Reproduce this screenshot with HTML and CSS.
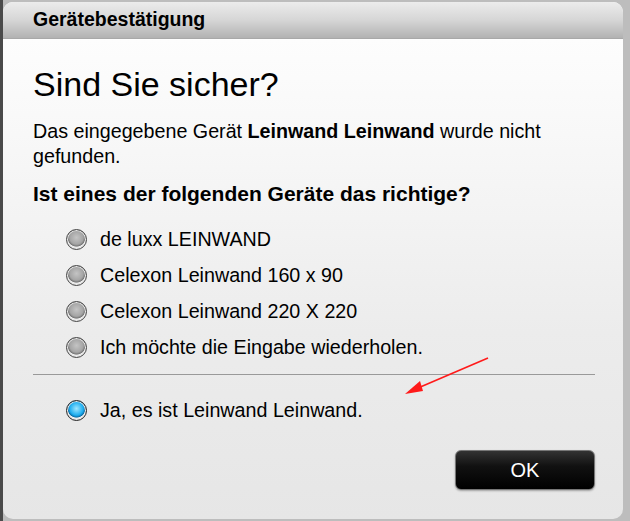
FILE: index.html
```html
<!DOCTYPE html>
<html lang="de">
<head>
<meta charset="utf-8">
<title>Gerätebestätigung</title>
<link rel="stylesheet" href="styles.css">
</head>
<body>
<div class="dialog">
  <div class="header">Gerätebestätigung</div>
  <div class="content">
    <h1 class="title">Sind Sie sicher?</h1>
    <p class="msg">Das eingegebene Gerät <b>Leinwand Leinwand</b> wurde nicht gefunden.</p>
    <p class="question">Ist eines der folgenden Geräte das richtige?</p>
    <ul class="options">
      <li class="option"><span class="radio"></span>de luxx LEINWAND</li>
      <li class="option"><span class="radio"></span>Celexon Leinwand 160 x 90</li>
      <li class="option"><span class="radio"></span>Celexon Leinwand 220 X 220</li>
      <li class="option"><span class="radio"></span>Ich möchte die Eingabe wiederholen.</li>
    </ul>
    <hr class="sep">
    <div class="option selected"><span class="radio checked"></span>Ja, es ist Leinwand Leinwand.</div>
    <div class="actions"><button class="ok">OK</button></div>
  </div>
  <svg class="arrow" width="100" height="50" viewBox="0 0 100 50">
    <line x1="95" y1="5" x2="18" y2="38" stroke="#ff1a1a" stroke-width="1.6"/>
    <polygon points="12,41 27,28 30,38" fill="#ff1a1a"/>
  </svg>
</div>
</body>
</html>
```
FILE: styles.css
```css
html, body {
  margin: 0;
  padding: 0;
}
body {
  width: 630px;
  height: 521px;
  background: linear-gradient(to right, #4a4a4a 0, #4a4a4a 3px, #bdbdbd 3px);
  font-family: "Liberation Sans", Arial, sans-serif;
  color: #000;
  overflow: hidden;
}
.dialog {
  position: relative;
  margin: 2px 0 0 3px;
  width: 620px;
  height: 517px;
  border-radius: 10px;
  background: linear-gradient(to bottom, #ffffff 0, #f7f7f7 150px, #ececec 330px, #e6e6e6 100%);
  overflow: hidden;
}
.header {
  height: 37px;
  box-sizing: border-box;
  padding: 6px 0 0 30px;
  font-size: 19.5px;
  font-weight: bold;
  background: linear-gradient(to bottom, #ececec 0, #d6d6d6 50%, #b2b2b2 100%);
  border-bottom: 1px solid #a8a8a8;
}
.content {
  padding: 0 28px 0 30px;
}
.title {
  margin: 25px 0 0;
  font-size: 34px;
  font-weight: normal;
  line-height: 40px;
}
.msg {
  margin: 15px 0 0;
  font-size: 19.7px;
  line-height: 25px;
}
.question {
  margin: 12px 0 0;
  font-size: 21px;
  font-weight: bold;
  line-height: 25px;
}
.options {
  list-style: none;
  margin: 15px 0 0;
  padding: 0;
}
.option {
  display: flex;
  align-items: center;
  height: 36px;
  padding-left: 33px;
  font-size: 19.7px;
}
.radio {
  width: 19px;
  height: 19px;
  margin-right: 13px;
  border-radius: 50%;
  border: 1px solid #444;
  background: radial-gradient(circle at 50% 40%, #c4c4c4 0, #a5a5a5 45%, #777 58%, #eeeeee 63%, #cfcfcf 100%);
  box-shadow: inset 0 0 0 1px #e8e8e8;
  flex: none;
}
.radio.checked {
  background: radial-gradient(circle at 50% 40%, #9fe6ff 0, #1eaef0 45%, #0a6fa8 58%, #f0f0f0 63%, #d8d8d8 100%);
  border-color: #222;
}
.sep {
  margin: 9px 0 0 0;
  height: 0;
  border: 0;
  border-top: 1px solid #999;
}
.selected {
  margin-top: 17px;
}
.actions {
  display: flex;
  justify-content: flex-end;
  margin-top: 22px;
}
.ok {
  width: 140px;
  height: 40px;
  border: 1px solid #777;
  border-radius: 6px;
  background: linear-gradient(to bottom, #333 0, #111 40%, #000 100%);
  color: #fff;
  font-family: "Liberation Sans", Arial, sans-serif;
  font-size: 20px;
  box-shadow: 0 1px 2px rgba(0,0,0,0.3);
}
.arrow {
  position: absolute;
  left: 390px;
  top: 351px;
}
```
